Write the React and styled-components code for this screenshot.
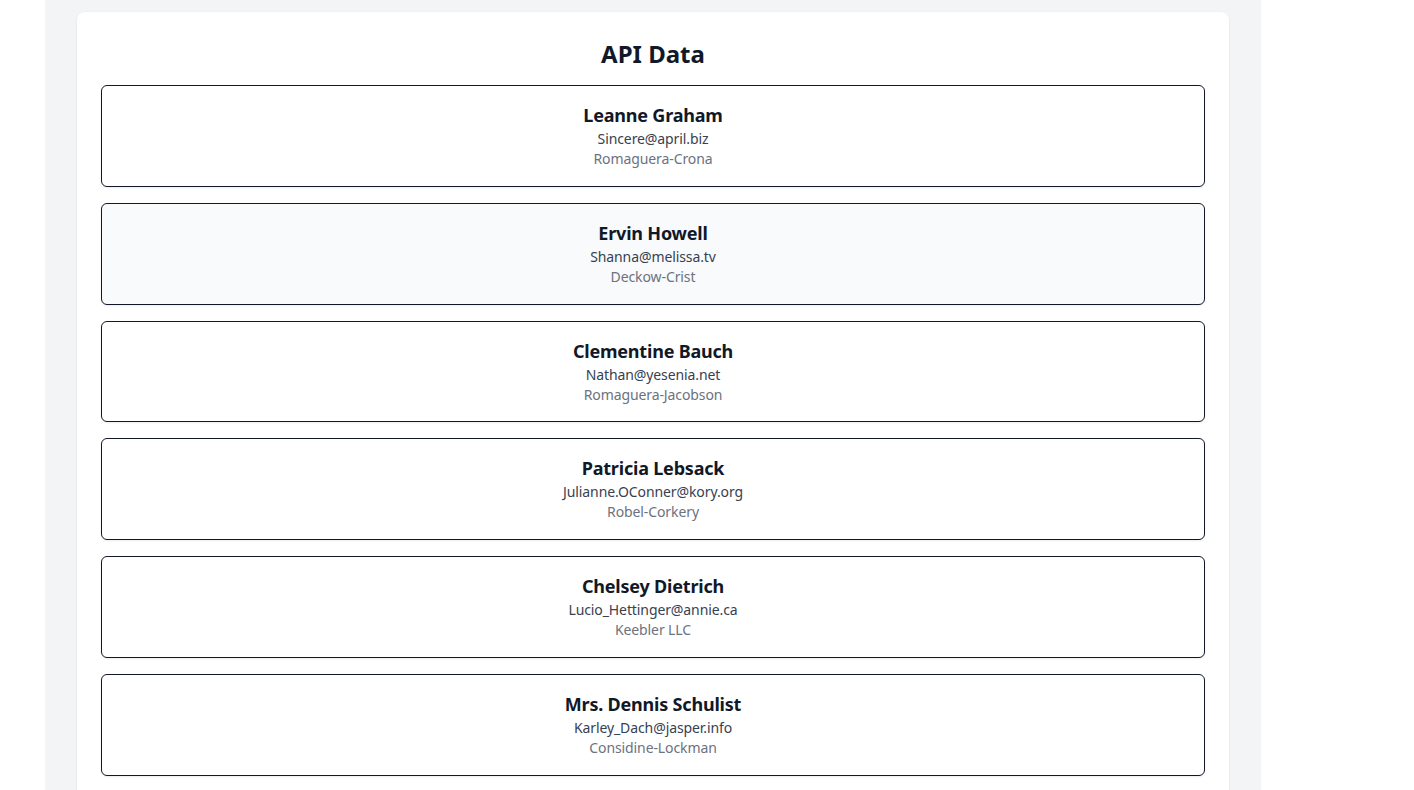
import React from 'react';
import styled, { createGlobalStyle } from 'styled-components';

const GlobalStyle = createGlobalStyle`
  body {
    margin: 0;
    background: #ffffff;
    font-family: "Noto Sans", "Open Sans", Arial, sans-serif;
  }
`;

const Page = styled.div`
  margin-left: 45px;
  width: 1216px;
  min-height: 790px;
  background-color: #f3f4f6;
  padding: 12px 32px 0;
  box-sizing: border-box;
`;

const Card = styled.div`
  background: #ffffff;
  border-radius: 8px;
  box-shadow: 0 1px 3px rgba(0, 0, 0, 0.08);
  padding: 26px 24px 24px;
  min-height: 800px;
`;

const Heading = styled.h1`
  font-size: 24px;
  line-height: 32px;
  font-weight: 700;
  color: #111827;
  text-align: center;
  margin: 0 0 15px;
`;

const List = styled.ul`
  list-style: none;
  margin: 0;
  padding: 0;
  display: flex;
  flex-direction: column;
  gap: 16px;
`;

const Item = styled.li`
  border: 1px solid #111827;
  border-radius: 6px;
  padding: 15px 16px 16.8px;
  text-align: center;
  background-color: ${(p) => (p.$active ? '#f8fafc' : '#ffffff')};
  box-shadow: 0 1px 2px rgba(0, 0, 0, 0.08);
`;

const Name = styled.h2`
  margin: 0;
  font-size: 18px;
  line-height: 28px;
  font-weight: 700;
  letter-spacing: -0.2px;
  color: #111827;
`;

const Email = styled.p`
  margin: 0;
  font-size: 14px;
  line-height: 20px;
  letter-spacing: -0.1px;
  color: #374151;
`;

const Company = styled.p`
  margin: 0;
  font-size: 14px;
  line-height: 20px;
  letter-spacing: -0.1px;
  color: #6b7280;
`;

const users = [
  { name: 'Leanne Graham', email: 'Sincere@april.biz', company: 'Romaguera-Crona' },
  { name: 'Ervin Howell', email: 'Shanna@melissa.tv', company: 'Deckow-Crist' },
  { name: 'Clementine Bauch', email: 'Nathan@yesenia.net', company: 'Romaguera-Jacobson' },
  { name: 'Patricia Lebsack', email: 'Julianne.OConner@kory.org', company: 'Robel-Corkery' },
  { name: 'Chelsey Dietrich', email: 'Lucio_Hettinger@annie.ca', company: 'Keebler LLC' },
  { name: 'Mrs. Dennis Schulist', email: 'Karley_Dach@jasper.info', company: 'Considine-Lockman' },
  { name: 'Kurtis Weissnat', email: 'Telly.Hoeger@billy.biz', company: 'Johns Group' },
];

const App = () => {
  return (
    <>
      <GlobalStyle />
      <Page>
        <Card>
          <Heading>API Data</Heading>
          <List>
            {users.map((user, index) => (
              <Item key={index} $active={index === 1}>
                <Name>{user.name}</Name>
                <Email>{user.email}</Email>
                <Company>{user.company}</Company>
              </Item>
            ))}
          </List>
        </Card>
      </Page>
    </>
  );
};

export default App;
